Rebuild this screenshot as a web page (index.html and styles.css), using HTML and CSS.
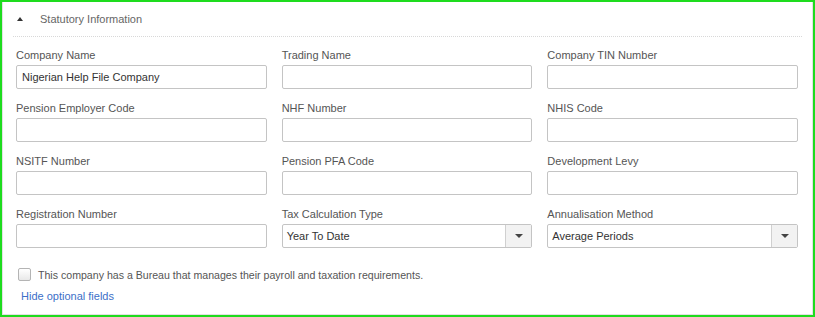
FILE: index.html
```html
<!DOCTYPE html>
<html lang="en">
<head>
    <meta charset="UTF-8">
    <title>Statutory Information</title>
    <link rel="stylesheet" href="styles.css">
</head>
<body>
    <div class="panel">
        <div class="panel-header">
            <span class="caret"></span>
            <span class="panel-title">Statutory Information</span>
        </div>
        <div class="form-grid">
            <div class="field">
                <label>Company Name</label>
                <input type="text" value="Nigerian Help File Company">
            </div>
            <div class="field">
                <label>Trading Name</label>
                <input type="text">
            </div>
            <div class="field">
                <label>Company TIN Number</label>
                <input type="text">
            </div>
            <div class="field">
                <label>Pension Employer Code</label>
                <input type="text">
            </div>
            <div class="field">
                <label>NHF Number</label>
                <input type="text">
            </div>
            <div class="field">
                <label>NHIS Code</label>
                <input type="text">
            </div>
            <div class="field">
                <label>NSITF Number</label>
                <input type="text">
            </div>
            <div class="field">
                <label>Pension PFA Code</label>
                <input type="text">
            </div>
            <div class="field">
                <label>Development Levy</label>
                <input type="text">
            </div>
            <div class="field">
                <label>Registration Number</label>
                <input type="text">
            </div>
            <div class="field">
                <label>Tax Calculation Type</label>
                <div class="select">
                    <span class="select-value">Year To Date</span>
                    <span class="select-btn"><span class="arrow"></span></span>
                </div>
            </div>
            <div class="field">
                <label>Annualisation Method</label>
                <div class="select">
                    <span class="select-value">Average Periods</span>
                    <span class="select-btn"><span class="arrow"></span></span>
                </div>
            </div>
        </div>
        <div class="check-row">
            <input type="checkbox" id="bureau">
            <label for="bureau">This company has a Bureau that manages their payroll and taxation requirements.</label>
        </div>
        <a class="toggle-link" href="#">Hide optional fields</a>
    </div>
</body>
</html>
```

FILE: styles.css
```css
html, body {
    height: 100%;
}

body {
    margin: 0;
    box-sizing: border-box;
    border: 2px solid #1edc1e;
    background-color: #fff;
    font-family: "Liberation Sans", Arial, sans-serif;
    font-size: 11px;
    color: #555;
}

.panel {
    box-sizing: border-box;
    height: 100%;
    border: 1px solid #e2e2e2;
    border-top: none;
    padding: 0 10px;
}

.panel-header {
    display: flex;
    align-items: center;
    height: 34px;
    border-bottom: 1px dotted #d8d8d8;
}

.caret {
    width: 0;
    height: 0;
    margin-left: 4px;
    border-left: 3px solid transparent;
    border-right: 3px solid transparent;
    border-bottom: 4px solid #333;
}

.panel-title {
    margin-left: 17px;
    color: #666;
}

.form-grid {
    display: grid;
    grid-template-columns: 1fr 1fr 1fr;
    column-gap: 15px;
    row-gap: 11px;
    padding: 10px 4px 0 3px;
}

.field label {
    display: block;
    height: 16px;
    line-height: 16px;
    margin-bottom: 2px;
}

.field input {
    display: block;
    box-sizing: border-box;
    width: 100%;
    height: 24px;
    margin: 0;
    padding: 0 5px;
    border: 1px solid #c4c4c4;
    border-radius: 2px;
    font-family: inherit;
    font-size: 11px;
    color: #333;
}

.select {
    display: flex;
    box-sizing: border-box;
    height: 24px;
    border: 1px solid #c4c4c4;
    border-radius: 2px;
    color: #333;
}

.select-value {
    flex: 1;
    line-height: 22px;
    padding-left: 4px;
}

.select-btn {
    display: flex;
    align-items: center;
    justify-content: center;
    width: 25px;
    border-left: 1px solid #d0d0d0;
    background-color: #f2f2f2;
}

.arrow {
    width: 0;
    height: 0;
    border-left: 4px solid transparent;
    border-right: 4px solid transparent;
    border-top: 4px solid #444;
}

.check-row {
    display: flex;
    align-items: center;
    margin-top: 20px;
    padding-left: 5px;
    font-size: 10.6px;
}

.check-row input {
    appearance: none;
    box-sizing: border-box;
    width: 13px;
    height: 13px;
    margin: 0 7px 0 0;
    border: 1px solid #b4b4b4;
    border-radius: 2px;
    background: linear-gradient(#fff, #e8e8e8);
}

.toggle-link {
    display: inline-block;
    margin-top: 9px;
    margin-left: 8px;
    color: #3c6fc8;
    text-decoration: none;
}
```
